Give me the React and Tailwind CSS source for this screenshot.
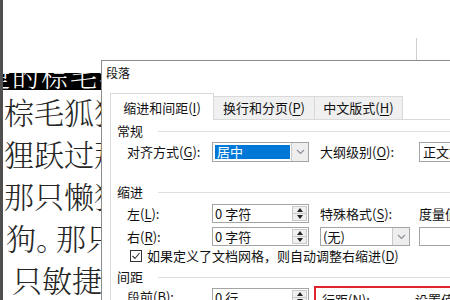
import React from 'react';

const U = ({ children }) => <span className="underline underline-offset-[2px] decoration-[1px]">{children}</span>;

const Chevron = () => (
    <svg width="9" height="6" viewBox="0 0 9 6">
        <path d="M1 1l3.5 3.5L8 1" fill="none" stroke="#8a909a" strokeWidth="1.2" />
    </svg>
);

// little up/down spinner inside the number boxes
const Spin = ({ down = true }) => (
    <div className="w-[15px] my-[1px] mr-[1px] border border-[#c9c9c9] bg-[#f0f0f0] flex flex-col">
        <div className={`flex-1 flex items-center justify-center ${down ? 'border-b border-[#c9c9c9]' : ''}`}>
            <svg width="6" height="4" viewBox="0 0 6 4"><path d="M0 4h6L3 0z" fill="#222" /></svg>
        </div>
        {down && (
            <div className="flex-1 flex items-center justify-center">
                <svg width="6" height="4" viewBox="0 0 6 4"><path d="M0 0h6L3 4z" fill="#222" /></svg>
            </div>
        )}
    </div>
);

const NumBox = ({ value, className = '' }) => (
    <div className={`w-[97px] h-[19px] shrink-0 border border-[#a5a5a5] bg-white flex ${className}`}>
        <span className="flex-1 pl-[2px] leading-[17px]">{value}</span>
        <Spin />
    </div>
);

const Section = ({ title, className = '' }) => (
    <div className={`flex items-center h-[16px] ${className}`}>
        <span className="leading-[16px]">{title}</span>
        <div className="flex-1 h-px bg-[#dedede] ml-[15px]" />
    </div>
);

const Label = ({ children, className = '' }) => (
    <span className={`shrink-0 leading-[16px] whitespace-nowrap ${className}`}>{children}</span>
);

const docLine = "h-[42px] leading-[42px] text-[30px] whitespace-nowrap";

export default function App() {
    return (
        <div className="w-[450px] h-[300px] overflow-hidden bg-white flex font-['Noto_Sans_CJK_SC',sans-serif]">
            {/* window edge */}
            <div className="w-[3px] shrink-0 bg-[#4f4f4f]" />

            {/* document behind the dialog */}
            <div className="w-[98px] shrink-0 overflow-hidden text-[#262626] font-light font-['Noto_Serif_CJK_SC','Noto_Sans_CJK_SC',serif]">
                <div className="h-[73px]" />
                <div className="h-[17px] bg-black overflow-hidden">
                    <div className="mt-[-11px] ml-[-20px] whitespace-nowrap text-white text-[27px] leading-[27px] tracking-[2px]">
                        捷的棕毛狐狸
                    </div>
                </div>
                <div className={`${docLine} ml-[1px]`}>棕毛狐狸跃过</div>
                <div className={`${docLine} ml-[1px]`}>狸跃过那只懒</div>
                <div className={`${docLine} ml-[1px]`}>那只懒狗。那</div>
                <div className={`${docLine} ml-[3px]`}>
                    狗<span className="tracking-[-10px]">。</span>那只敏捷
                </div>
                <div className={`${docLine} ml-[9px]`}>只敏捷的棕毛</div>
            </div>

            {/* dialog column */}
            <div className="flex-1 flex flex-col min-w-0">
                <div className="h-[60px] shrink-0 flex items-end">
                    <div className="ml-[315px] w-px h-[22px] bg-[#cfcfcf]" />
                </div>

                <div className="flex-1 border-t border-l border-[#8c8c8c] bg-white text-[13px] text-[#111] flex flex-col">
                    <div className="h-[32px] shrink-0 pl-[4px] pt-[4px] text-[12px] leading-[16px]">段落</div>

                    {/* tabs */}
                    <div className="ml-[8px] h-[26px] shrink-0 flex items-end">
                        <div className="relative z-10 w-[104px] h-[27px] mb-[-1px] border-t border-x border-[#d9d9d9] bg-white pt-[6px] text-center leading-[16px]">
                            缩进和间距(<U>I</U>)
                        </div>
                        <div className="w-[101px] h-[23px] border-t border-r border-[#d9d9d9] bg-[#f0f0f0] pt-[3px] text-center leading-[16px]">
                            换行和分页(<U>P</U>)
                        </div>
                        <div className="w-[88px] h-[23px] border-t border-r border-[#d9d9d9] bg-[#f0f0f0] pt-[3px] text-center leading-[16px]">
                            中文版式(<U>H</U>)
                        </div>
                    </div>

                    {/* tab page */}
                    <div className="ml-[8px] flex-1 border-t border-l border-[#d9d9d9] bg-white pl-[6px] overflow-hidden">
                        <Section title="常规" className="mt-[3px]" />

                        <div className="mt-[3px] h-[20px] flex items-center">
                            <Label className="ml-[10px] w-[85px]">对齐方式(<U>G</U>):</Label>
                            <div className="w-[97px] h-[20px] shrink-0 border border-[#a5a5a5] flex">
                                <div className="flex-1 my-[2px] ml-[2px] mr-[1px] bg-[#0078d7] text-white pl-[2px] leading-[14px]">居中</div>
                                <div className="w-[17px] border-l border-[#c9c9c9] bg-[#eeeeee] flex items-center justify-center">
                                    <Chevron />
                                </div>
                            </div>
                            <Label className="ml-[11px] w-[99px]">大纲级别(<U>O</U>):</Label>
                            <div className="flex-1 h-[20px] border-y border-l border-[#a5a5a5] pl-[3px] leading-[18px] whitespace-nowrap overflow-hidden">正文文本</div>
                        </div>

                        <Section title="缩进" className="mt-[22px]" />

                        <div className="mt-[4px] h-[19px] flex items-center">
                            <Label className="ml-[10px] w-[85px]">左(<U>L</U>):</Label>
                            <NumBox value="0 字符" />
                            <Label className="ml-[11px] w-[99px]">特殊格式(<U>S</U>):</Label>
                            <Label>度量值(<U>Y</U>):</Label>
                        </div>

                        <div className="mt-[4px] h-[19px] flex items-center">
                            <Label className="ml-[10px] w-[85px]">右(<U>R</U>):</Label>
                            <NumBox value="0 字符" />
                            <div className="ml-[11px] w-[90px] h-[19px] shrink-0 border border-[#a5a5a5] flex">
                                <span className="flex-1 pl-[2px] leading-[17px]">(无)</span>
                                <div className="w-[17px] border-l border-[#c9c9c9] bg-[#eeeeee] flex items-center justify-center">
                                    <Chevron />
                                </div>
                            </div>
                            <div className="ml-[9px] flex-1 h-[19px] border-y border-l border-[#a5a5a5]" />
                        </div>

                        <div className="mt-[2px] h-[16px] flex items-center">
                            <div className="ml-[13px] w-[12px] h-[12px] shrink-0 border border-[#333] bg-white flex items-center justify-center">
                                <svg width="10" height="10" viewBox="0 0 10 10">
                                    <path d="M1.5 5l2.5 2.5L8.5 2" fill="none" stroke="#333" strokeWidth="1.1" />
                                </svg>
                            </div>
                            <Label className="ml-[5px]">如果定义了文档网格，则自动调整右缩进(<U>D</U>)</Label>
                        </div>

                        <Section title="间距" className="mt-[5px]" />

                        <div className="mt-[3px] flex items-start">
                            <Label className="ml-[10px] w-[85px] pt-[1px]">段前(<U>B</U>):</Label>
                            <NumBox value="0 行" />
                            <div className="ml-[5px] mt-[-2px] flex-1 min-w-0 h-[40px] border-2 border-r-0 border-[#e0242b] pt-[4px] pl-[6px] flex">
                                <Label className="w-[93px]">行距(<U>N</U>):</Label>
                                <Label>设置值(<U>A</U>):</Label>
                            </div>
                        </div>
                    </div>
                </div>
            </div>
        </div>
    );
}
